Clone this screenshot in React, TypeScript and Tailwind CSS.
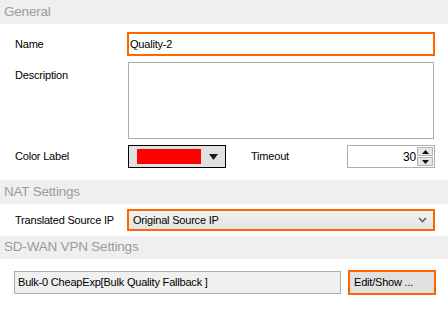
import React from "react";

function SectionHeader({ title, className = "" }: { title: string; className?: string }) {
  return (
    <div className={`flex items-center bg-[#efefef] pl-[4px] text-[13.5px] text-[#9b9b9b] ${className}`}>
      {title}
    </div>
  );
}

export default function App() {
  return (
    <div
      className="w-[448px] h-[311px] overflow-hidden bg-white text-[11px] tracking-[-0.2px] text-black"
      style={{ fontFamily: '"Liberation Sans", Arial, sans-serif' }}
    >
      <SectionHeader title="General" className="h-[24px]" />

      {/* Name */}
      <div className="mt-[8px] flex h-[24px] items-center">
        <div className="w-[127px] pl-[15px]">Name</div>
        <div className="flex h-[24px] w-[308px] items-center border-2 border-[#ff6600] bg-white pl-[1px]">
          Quality-2
        </div>
      </div>

      {/* Description */}
      <div className="mt-[6px] flex">
        <div className="w-[128px] pl-[15px] pt-[5px]">Description</div>
        <div className="h-[77px] w-[306px] border border-[#adadad] bg-white" />
      </div>

      {/* Color label + timeout */}
      <div className="mt-[6px] flex h-[23px] items-center">
        <div className="w-[128px] pl-[15px]">Color Label</div>
        <div className="flex h-[23px] w-[98px] items-center border border-black bg-[#e1e1e1] pl-[8px]">
          <div className="h-[15px] w-[64px] bg-[#ff0000]" />
          <svg width="9" height="6" viewBox="0 0 9 6" className="ml-[8px]">
            <path d="M0 0h9L4.5 6z" fill="#1a1a1a" />
          </svg>
        </div>
        <div className="ml-[25px] w-[96px]">Timeout</div>
        <div className="flex h-[23px] w-[88px] border border-[#adadad] bg-white">
          <div className="flex flex-1 items-center justify-end pr-[1px] text-[12px]">30</div>
          <div className="flex w-[17px] flex-col gap-[1px] py-[1px] pr-[1px]">
            <div className="flex flex-1 items-center justify-center border border-[#b4b4b4] bg-[#e6e6e6]">
              <svg width="7" height="4" viewBox="0 0 7 4">
                <path d="M3.5 0L7 4H0z" fill="#111" />
              </svg>
            </div>
            <div className="flex flex-1 items-center justify-center border border-[#b4b4b4] bg-[#e6e6e6]">
              <svg width="7" height="4" viewBox="0 0 7 4">
                <path d="M0 0h7L3.5 4z" fill="#111" />
              </svg>
            </div>
          </div>
        </div>
      </div>

      <SectionHeader title="NAT Settings" className="mt-[12px] h-[24px]" />

      {/* Translated source IP */}
      <div className="mt-[5px] flex h-[22px] items-center">
        <div className="w-[127px] pl-[15px]">Translated Source IP</div>
        <div className="flex h-[22px] w-[308px] items-center justify-between border-2 border-[#ff6600] bg-gradient-to-b from-[#f3f3f3] to-[#e3e3e3] pl-[4px] pr-[6px]">
          <span>Original Source IP</span>
          <svg width="9" height="6" viewBox="0 0 9 6">
            <path d="M1 1l3.5 3.5L8 1" stroke="#606060" strokeWidth="1.6" fill="none" />
          </svg>
        </div>
      </div>

      <SectionHeader title="SD-WAN VPN Settings" className="mt-[5px] h-[23px]" />

      {/* SD-WAN VPN */}
      <div className="mt-[11px] flex items-center pl-[14px]">
        <div className="flex h-[23px] w-[327px] items-center border border-[#adadad] bg-[#f0f0f0] pl-[3px]">
          Bulk-0 CheapExp[Bulk Quality Fallback ]
        </div>
        <div className="ml-[7px] flex h-[25px] w-[88px] items-center border-2 border-[#ff6600] bg-[#e1e1e1] pl-[4px]">
          Edit/Show ...
        </div>
      </div>
    </div>
  );
}
